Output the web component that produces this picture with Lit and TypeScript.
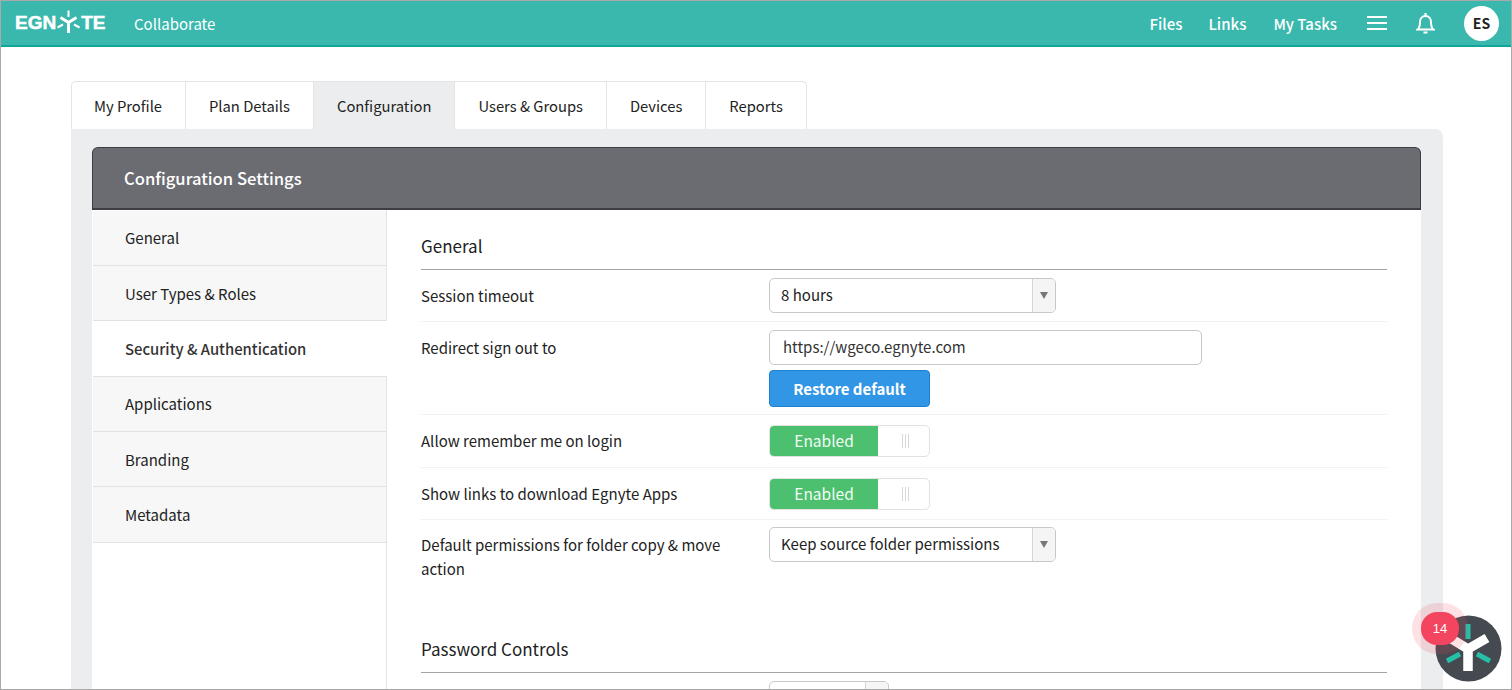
import { css, html, LitElement } from 'lit';
import { customElement } from 'lit/decorators.js';

const TABS = ['My Profile', 'Plan Details', 'Configuration', 'Users & Groups', 'Devices', 'Reports'];
const SIDE = ['General', 'User Types & Roles', 'Security & Authentication', 'Applications', 'Branding', 'Metadata'];

@customElement('app-root')
export class AppRoot extends LitElement {
  static override styles = css`
    :host {
      display: block;
      position: relative;
      box-sizing: border-box;
      height: 690px;
      overflow: hidden;
      background: #fff;
      border: 1px solid #a9a9a9;
      font-family: 'Noto Sans CJK SC', 'Open Sans', sans-serif;
      font-size: 15px;
      line-height: 24px;
      color: #222;
    }

    .top {
      display: flex;
      align-items: center;
      box-sizing: border-box;
      height: 46px;
      padding: 0 12px 0 14px;
      background: #3ab8ad;
      border-bottom: 2px solid #12a698;
      color: #fff;
    }
    .logo {
      display: flex;
      align-items: center;
      width: 119px;
      font-family: 'Liberation Sans', sans-serif;
      font-weight: 700;
      font-size: 19px;
      -webkit-text-stroke: 0.5px #fff;
    }
    .logo svg {
      margin: -2px 1px 0 1px;
    }
    .app {
      flex: 1;
      padding-top: 2px;
    }
    .top a {
      font-weight: 500;
      margin-right: 26px;
      padding-top: 2px;
    }
    .top a + a + a {
      margin-left: 1px;
    }
    .menu {
      margin: 0 29px 0 4px;
    }
    .bell {
      margin-right: 29px;
    }
    .avatar {
      display: flex;
      align-items: center;
      justify-content: center;
      width: 35px;
      height: 35px;
      border-radius: 50%;
      background: #fff;
      color: #222;
      font-size: 14px;
      font-weight: 700;
    }

    .page {
      padding: 34px 68px 0 70px;
    }
    .tabs {
      display: flex;
      width: max-content;
      height: 48px;
      box-sizing: border-box;
      border: 1px solid #e3e4e6;
      border-bottom: none;
      border-radius: 5px 5px 0 0;
      overflow: hidden;
      font-size: 14.75px;
    }
    .tab {
      display: flex;
      align-items: center;
      padding: 0 23px;
      border-right: 1px solid #e3e4e6;
    }
    .tab:first-child {
      padding-left: 22px;
    }
    .tab:last-child {
      border-right: none;
    }
    .tab.on {
      background: #ebedef;
    }

    .panel {
      padding: 18px 22px 0 21px;
      background: #ebedef;
      border-radius: 0 8px 0 0;
      height: 600px;
    }
    .head {
      display: flex;
      align-items: center;
      box-sizing: border-box;
      height: 63px;
      padding-left: 31px;
      background: #6b6c72;
      border: 1px solid #3d3e44;
      border-bottom-width: 2px;
      border-radius: 6px 6px 0 0;
      color: #fff;
      font-size: 16.6px;
      font-weight: 500;
    }
    .body {
      display: flex;
      height: 600px;
      background: #fff;
    }

    .side {
      box-sizing: border-box;
      width: 295px;
      padding-top: 0.5px;
      border-right: 1px solid #e3e4e6;
      flex: none;
    }
    .side div {
      display: flex;
      align-items: center;
      box-sizing: border-box;
      height: 55.4px;
      padding: 1px 0 0 32px;
      background: #f7f7f7;
      border-bottom: 1px solid #e1e2e4;
      margin-left: 1px;
    }
    .side div.on {
      background: #fff;
      font-weight: 500;
      font-size: 14.85px;
      margin-right: -1px;
      position: relative;
      color: #333;
    }

    .main {
      flex: 1;
      padding: 24px 34px 0 34px;
    }
    h3 {
      margin: 0;
      height: 36px;
      box-sizing: border-box;
      border-bottom: 1px solid #a5a5a5;
      font-size: 17px;
      font-weight: 400;
      line-height: 24px;
    }
    .row {
      display: flex;
      box-sizing: border-box;
      padding-top: 8px;
      border-bottom: 1px solid #f2f2f2;
    }
    .row.last {
      border-bottom: none;
      height: 118px;
      margin-top: -1px;
    }
    .lab {
      box-sizing: border-box;
      width: 348px;
      padding: 6px 47px 0 0;
    }
    .sel {
      display: flex;
      box-sizing: border-box;
      width: 287px;
      height: 35px;
      border: 1px solid #c8c8c8;
      border-radius: 5px;
      overflow: hidden;
      margin-bottom: 8px;
    }
    .sel span {
      flex: 1;
      padding: 4px 0 0 11px;
    }
    .sel i {
      display: flex;
      align-items: center;
      justify-content: center;
      width: 22px;
      background: #f5f5f5;
      border-left: 1px solid #d5d5d5;
    }
    .sel i::after {
      content: '';
      border: 4px solid transparent;
      border-top: 7px solid #777;
      border-bottom: none;
    }
    .sel.small {
      width: 120px;
    }
    input {
      display: block;
      box-sizing: border-box;
      width: 433px;
      height: 35px;
      padding: 0 13px 2px;
      border: 1px solid #c8c8c8;
      border-radius: 5px;
      font: inherit;
      color: #333;
    }
    button {
      display: block;
      box-sizing: border-box;
      width: 161px;
      height: 37px;
      margin: 5px 0 7px;
      padding: 0;
      background: #3296e6;
      border: 1px solid #1f7fd0;
      border-radius: 4px;
      color: #fff;
      font: inherit;
      font-weight: 700;
    }
    .toggle {
      display: flex;
      box-sizing: border-box;
      width: 161px;
      height: 32px;
      margin: 2px 0 9.5px;
      border: 1px solid #e2e2e2;
      border-radius: 5px;
      overflow: hidden;
    }
    .toggle b {
      display: flex;
      align-items: center;
      justify-content: center;
      width: 108px;
      padding-bottom: 2px;
      background: #4cc06e;
      color: #f2fbf4;
      font-size: 15.5px;
      font-weight: 400;
    }
    .toggle i {
      flex: 1;
      display: flex;
      align-items: center;
      justify-content: center;
      gap: 2px;
      padding-left: 3px;
    }
    .toggle i::before,
    .toggle i::after,
    .toggle i span {
      content: '';
      width: 1px;
      height: 14px;
      background: #d8d8d8;
    }

    .bot {
      position: absolute;
      right: 9px;
      bottom: 7px;
      width: 67px;
      height: 67px;
    }
    .badge {
      position: absolute;
      right: 52px;
      bottom: 44px;
      width: 38px;
      height: 33px;
      border-radius: 16px;
      background: #f3455f;
      box-shadow: 0 0 0 9px rgba(243, 69, 95, 0.16);
      color: #fff;
      font-family: 'Liberation Sans', sans-serif;
      font-size: 13px;
      line-height: 33px;
      text-align: center;
    }
  `;

  override render() {
    return html`
      <div class="top">
        <div class="logo">
          EGN<svg width="23" height="24" viewBox="0 0 23 24" fill="none" stroke="#fff">
            <path d="M11.5 12V23M11.5 12.5L3.5 7.5M11.5 12.5L19.5 7.5" stroke-width="3" />
            <path d="M11.5 0.5V7M0.5 17.5L6 14.5M22.5 17.5L17 14.5" stroke-width="2" />
          </svg>TE
        </div>
        <div class="app">Collaborate</div>
        <a>Files</a><a>Links</a><a>My Tasks</a>
        <svg class="menu" width="20" height="14" viewBox="0 0 20 14" fill="#fff">
          <rect y="0" width="20" height="2" /><rect y="6" width="20" height="2" /><rect y="12" width="20" height="2" />
        </svg>
        <svg class="bell" width="19" height="21" viewBox="0 0 19 21" fill="none" stroke="#fff" stroke-width="2">
          <path d="M1.5 16.5C3.5 15 4 13 4 9C4 5.5 6.3 3 9.5 3C12.7 3 15 5.5 15 9C15 13 15.5 15 17.5 16.5Z" />
          <path d="M9.5 0V3M7.5 19.5H11.5" />
        </svg>
        <div class="avatar">ES</div>
      </div>
      <div class="page">
        <div class="tabs">
          ${TABS.map((t, i) => html`<div class="tab ${i === 2 ? 'on' : ''}">${t}</div>`)}
        </div>
        <div class="panel">
          <div class="head">Configuration Settings</div>
          <div class="body">
            <div class="side">
              ${SIDE.map((s, i) => html`<div class="${i === 2 ? 'on' : ''}">${s}</div>`)}
            </div>
            <div class="main">
              <h3>General</h3>
              <div class="row">
                <div class="lab">Session timeout</div>
                <div class="sel"><span>8 hours</span><i></i></div>
              </div>
              <div class="row">
                <div class="lab">Redirect sign out to</div>
                <div>
                  <input value="https://wgeco.egnyte.com" />
                  <button>Restore default</button>
                </div>
              </div>
              <div class="row">
                <div class="lab">Allow remember me on login</div>
                <div class="toggle"><b>Enabled</b><i><span></span></i></div>
              </div>
              <div class="row">
                <div class="lab">Show links to download Egnyte Apps</div>
                <div class="toggle"><b>Enabled</b><i><span></span></i></div>
              </div>
              <div class="row last">
                <div class="lab">Default permissions for folder copy &amp; move action</div>
                <div class="sel"><span>Keep source folder permissions</span><i></i></div>
              </div>
              <h3>Password Controls</h3>
              <div class="row">
                <div class="lab"></div>
                <div class="sel small"><span></span><i></i></div>
              </div>
            </div>
          </div>
        </div>
      </div>
      <svg class="bot" viewBox="0 0 67 67">
        <circle cx="33.5" cy="33.5" r="33" fill="#454a50" />
        <path d="M33 34V56M33 34L15 23M33 34L52 23" stroke="#fff" stroke-width="9.5" fill="none" />
        <path d="M33 9V24M12 46L25 39M55 46L42 39" stroke="#26bfa8" stroke-width="5" fill="none" />
      </svg>
      <div class="badge">14</div>
    `;
  }
}
